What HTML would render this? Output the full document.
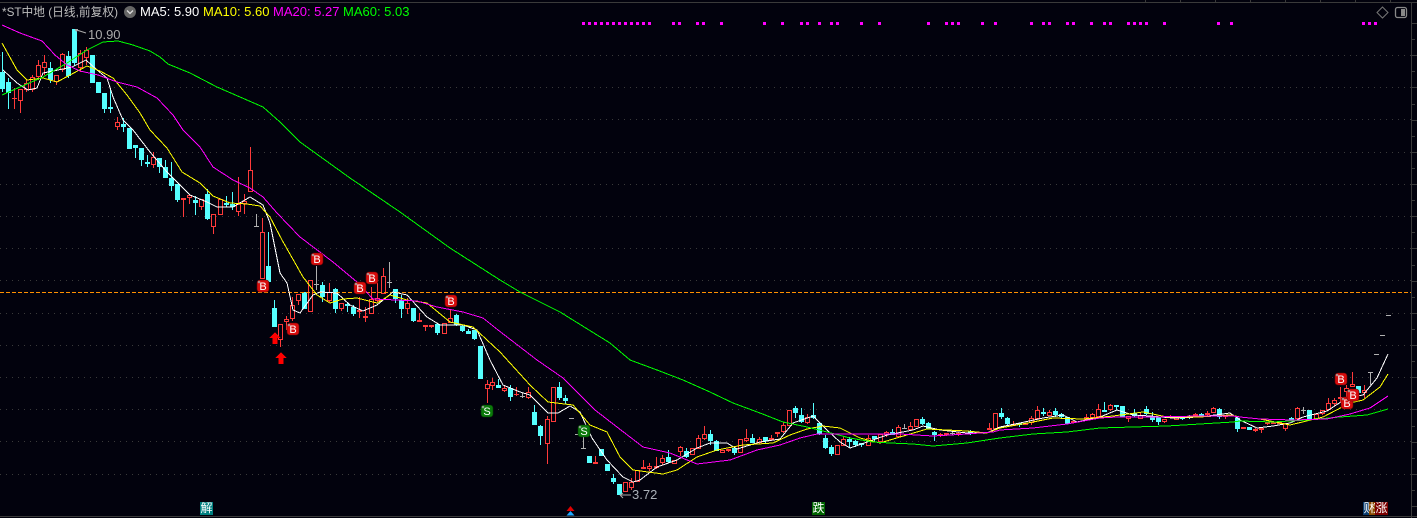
<!DOCTYPE html>
<html lang="zh">
<head>
<meta charset="utf-8">
<title>*ST中地 日线</title>
<style>
html,body{margin:0;padding:0;background:#02020d;width:1417px;height:518px;overflow:hidden}
svg{display:block;position:absolute;left:0;top:0}
text{font-family:"Liberation Sans","Noto Sans CJK SC",sans-serif}
.l{fill:none;shape-rendering:crispEdges;stroke-linejoin:round}
.lab{position:absolute;top:502px;height:13px;width:13px;color:#fff;font:12px/13px "Liberation Sans","Noto Sans CJK SC",sans-serif;text-align:center;overflow:hidden}
</style>
</head>
<body>
<svg id="c" width="1417" height="518" viewBox="0 0 1417 518" xmlns="http://www.w3.org/2000/svg">
<g id="frame" shape-rendering="crispEdges"></g>
<g id="candles" shape-rendering="crispEdges"></g>
<line x1="0" y1="292.5" x2="1411" y2="292.5" stroke="#ff9000" stroke-width="1" stroke-dasharray="4 2" shape-rendering="crispEdges"/>

<polyline class="l" stroke="#ffffff" stroke-width="1" points="3,70 17,83 28,90 37,88 43,73 58,70 72,67 86,60 97,70 107,78 113,97 123,120 133,130 150,152 167,172 190,195 207,202 217,207 233,207 250,197 263,205 270,223 280,273 287,283 293,310 300,313 313,295 320,292 337,293 350,305 363,311 377,305 393,292 407,295 427,317 440,325 463,325 477,330 490,360 503,385 520,392 530,395 548,413 558,413 570,406 580,412 592,438 607,460 623,477 633,482 640,480 657,467 677,460 697,448 710,443 727,443 737,449 760,442 780,439 793,423 813,416 827,430 840,442 850,448 867,442 887,435 913,430 923,426 940,430 967,433 987,433 1000,427 1020,423 1043,418 1063,415 1077,422 1100,417 1117,410 1133,415 1150,416 1173,418 1200,417 1230,413 1240,420 1257,428 1273,426 1290,423 1303,417 1327,411 1347,398 1363,395 1377,378 1388,354"/>
<polyline class="l" stroke="#ffff00" stroke-width="1" points="2,43 17,70 27,80 43,78 57,82 70,75 87,66 100,71 113,78 127,95 140,113 150,130 167,148 182,172 200,183 213,196 230,203 247,204 260,206 270,217 282,240 303,277 317,295 330,303 343,299 357,298 377,303 390,295 407,300 427,303 450,322 473,327 500,352 530,385 548,402 573,405 590,425 607,432 620,457 633,470 663,474 677,470 697,457 717,450 743,445 773,443 790,435 807,429 823,426 840,428 860,438 880,443 900,437 927,429 967,431 987,433 1000,428 1033,422 1053,418 1083,419 1113,416 1143,412 1167,417 1200,417 1230,415 1240,417 1260,419 1290,425 1323,417 1350,403 1363,400 1380,387 1388,374"/>
<polyline class="l" stroke="#00ff00" stroke-width="1" points="2,95 20,87 43,77 67,63 87,50 103,42 118,41 133,45 150,51 160,57 168,64 190,73 217,87 240,97 263,107 280,122 300,142 350,178 400,212 450,248 500,280 520,292 560,312 589,330 610,343 630,360 657,370 683,380 710,392 733,403 760,413 783,422 807,427 827,432 850,438 873,442 890,443 913,444 933,446 967,443 993,439 1000,438 1033,434 1067,432 1100,428 1133,427 1167,426 1200,424 1233,422 1240,421 1273,422 1307,420 1340,417 1367,415 1388,409"/>
<polyline class="l" stroke="#ff00ff" stroke-width="1" points="2,25 20,33 42,41 55,55 67,65 80,71 98,75 117,82 137,87 157,98 173,115 183,130 200,147 213,167 233,180 250,188 263,197 277,213 300,237 333,262 357,282 373,299 397,300 417,301 437,307 463,312 483,318 498,330 537,360 563,378 595,410 617,427 643,447 670,453 697,464 730,460 757,450 780,445 800,438 817,434 843,434 880,434 900,434 933,436 967,434 993,432 1000,430 1033,428 1067,424 1100,418 1117,417 1150,417 1200,416 1233,416 1240,417 1260,419 1293,420 1327,419 1350,414 1370,408 1388,396"/>

<!-- signals -->
<path fill="#ff0000" d="M275 332l5.500 6h-3v6h-5v-6h-3zM281 352l5.500 6h-3v6h-5v-6h-3z" shape-rendering="crispEdges"/>
<g id="badges"></g>

<!-- top magenta signal dots -->
<path id="dots" fill="#ff00ff" shape-rendering="crispEdges" d="M582 22h3v3h-3zM588 22h3v3h-3zM594 22h3v3h-3zM600 22h3v3h-3zM606 22h3v3h-3zM612 22h3v3h-3zM618 22h3v3h-3zM624 22h3v3h-3zM630 22h3v3h-3zM636 22h3v3h-3zM642 22h3v3h-3zM648 22h3v3h-3zM672 22h3v3h-3zM678 22h3v3h-3zM696 22h3v3h-3zM702 22h3v3h-3zM720 22h3v3h-3zM763 22h3v3h-3zM781 22h3v3h-3zM800 22h3v3h-3zM806 22h3v3h-3zM818 22h3v3h-3zM830 22h3v3h-3zM836 22h3v3h-3zM860 22h3v3h-3zM878 22h3v3h-3zM927 22h3v3h-3zM945 22h3v3h-3zM951 22h3v3h-3zM957 22h3v3h-3zM981 22h3v3h-3zM994 22h3v3h-3zM1030 22h3v3h-3zM1042 22h3v3h-3zM1048 22h3v3h-3zM1066 22h3v3h-3zM1072 22h3v3h-3zM1090 22h3v3h-3zM1103 22h3v3h-3zM1109 22h3v3h-3zM1127 22h3v3h-3zM1133 22h3v3h-3zM1139 22h3v3h-3zM1145 22h3v3h-3zM1163 22h3v3h-3zM1217 22h3v3h-3zM1230 22h3v3h-3zM1362 22h3v3h-3zM1368 22h3v3h-3zM1374 22h3v3h-3z"/>

<path d="M86 33L75 29.500M75 29.500l3 0M75 29.500l2 2" stroke="#aaa" fill="none"/>
<path d="M631 495H620M620 495l3-2M620 495l3 3" stroke="#aaa" fill="none"/>
<text x="88" y="39" font-size="13" fill="#aaaaaa">10.90</text>
<text x="632" y="499" font-size="13" fill="#aab0b8">3.72</text>

<!-- header -->
<text x="2" y="16" font-size="12" fill="#bdbdbd" textLength="116" lengthAdjust="spacingAndGlyphs">*ST中地 (日线,前复权)</text>
<circle cx="130" cy="12" r="6" fill="#666"/>
<path d="M127 10.500l3 3 3-3" stroke="#ddd" stroke-width="1.300" fill="none"/>
<text x="140" y="16" font-size="13" fill="#ffffff">MA5: 5.90</text>
<text x="203" y="16" font-size="13" fill="#ffff00">MA10: 5.60</text>
<text x="273" y="16" font-size="13" fill="#ff00ff">MA20: 5.27</text>
<text x="343" y="16" font-size="13" fill="#00ff00">MA60: 5.03</text>

<!-- top right icons -->
<path d="M1382.500 7L1388 12.500L1382.500 18L1377 12.500Z" fill="none" stroke="#777"/>
<rect x="1395.500" y="7.500" width="11" height="10" rx="2" fill="none" stroke="#888" stroke-width="1.300"/>
<rect x="1401" y="9" width="4" height="7" fill="#888"/>

<!-- bottom marker -->
<path d="M570.500 506l4 5h-8z" fill="#e00000"/>
<path d="M570.500 511l4 4.500h-8z" fill="#20a8ff"/>
</svg>

<div class="lab" style="left:200px;background:#008080">解</div>
<div class="lab" style="left:812px;background:#006400">跌</div>
<div class="lab" style="left:1363px;background:#0a3c6e">财</div>
<div class="lab" style="left:1369px;width:8px;background:#8a4a00">权</div>
<div class="lab" style="left:1375px;background:#7a0000">涨</div>

<script>
var R=[[14,88,98,99,109],[20,89,89,101,113],[26,80,83,90,92],[32,75,77,90,92],[38,60,65,77,80],[44,55,62,68,75],[56,75,75,82,85],[62,53,54,70,72],[80,50,53,68,72],[86,47,50,58,65],[117,117,122,127,130],[153,152,157,165,168],[183,198,198,200,217],[189,195,195,198,204],[201,199,199,207,210],[213,214,214,227,234],[220,199,199,215,215],[238,177,204,212,216],[244,194,201,204,214],[250,147,170,192,192],[262,218,232,279,279],[280,324,324,340,347],[286,316,319,322,330],[292,297,305,319,321],[298,294,294,301,305],[310,280,280,312,312],[329,283,292,301,302],[341,303,303,309,311],[359,297,310,312,318],[365,307,316,318,322],[371,287,299,314,314],[377,283,298,301,302],[383,268,276,294,294],[407,298,303,309,314],[419,313,320,322,322],[425,325,325,327,331],[431,325,325,327,328],[444,323,323,334,334],[450,309,318,323,323],[487,380,384,389,403],[492,378,382,386,390],[504,386,388,391,392],[516,387,394,395,396],[528,387,392,398,399],[547,416,419,444,464],[553,387,387,422,422],[595,456,462,464,464],[625,482,482,492,492],[631,478,482,488,490],[637,470,470,482,482],[643,460,467,469,469],[649,463,466,469,471],[656,457,466,468,469],[662,455,458,463,465],[674,460,460,464,464],[680,446,447,452,456],[692,448,448,455,455],[698,435,438,449,449],[704,426,434,439,440],[722,450,450,453,453],[728,449,449,451,452],[740,439,439,453,453],[746,429,438,441,442],[759,437,439,443,444],[771,435,438,440,441],[777,432,432,434,437],[783,422,425,432,433],[789,410,410,426,426],[807,414,417,423,424],[837,445,445,455,455],[843,437,439,446,446],[868,435,438,446,446],[880,434,434,442,442],[886,431,432,435,437],[898,425,427,437,438],[910,422,426,430,431],[916,419,419,427,427],[940,433,434,436,437],[946,433,433,435,436],[958,432,433,435,436],[989,423,428,430,430],[995,413,413,429,429],[1013,421,424,426,426],[1025,423,423,425,425],[1031,416,418,423,425],[1037,406,410,419,419],[1049,410,412,416,416],[1073,421,421,423,423],[1086,414,417,420,421],[1092,413,414,418,418],[1098,404,409,417,417],[1110,404,405,410,411],[1128,416,416,419,422],[1140,412,415,419,419],[1164,419,419,422,423],[1170,415,416,418,417],[1176,417,417,420,420],[1195,413,414,416,417],[1207,411,413,415,416],[1213,407,408,413,413],[1225,415,415,417,419],[1243,427,427,429,429],[1255,428,429,431,432],[1261,428,428,430,433],[1267,422,422,424,425],[1273,422,422,424,424],[1279,422,422,424,424],[1285,423,423,429,431],[1297,407,408,419,419],[1316,414,414,419,419],[1322,410,410,414,415],[1328,398,403,410,410],[1334,398,400,404,406],[1340,387,397,399,402],[1346,385,388,392,398],[1352,372,384,387,387],[1364,385,390,393,398]];
var C=[[2,52,72,89,92],[8,78,82,93,109],[50,62,68,80,83],[68,51,56,76,78],[74,29,29,63,66],[92,55,55,83,83],[98,82,82,93,93],[104,93,93,109,113],[110,90,107,109,113],[123,118,124,127,132],[129,128,128,149,149],[135,145,145,148,158],[141,148,148,160,166],[147,155,162,164,167],[159,158,158,167,173],[165,160,167,178,178],[171,162,178,186,191],[177,184,184,200,202],[195,196,200,203,215],[207,189,194,219,220],[226,196,203,205,207],[232,192,204,207,210],[268,232,266,282,282],[274,300,308,327,327],[304,292,292,309,309],[322,282,285,297,302],[335,288,289,309,313],[347,302,304,306,312],[353,305,307,314,316],[395,289,289,299,303],[401,295,300,309,318],[413,308,308,321,322],[437,324,324,333,335],[456,314,315,325,326],[462,325,326,331,332],[468,329,331,334,334],[474,330,330,339,340],[480,346,346,379,379],[498,379,385,388,388],[510,385,388,397,401],[534,405,412,425,425],[540,425,426,436,445],[559,382,387,398,400],[565,395,398,401,404],[589,456,456,463,463],[601,449,449,456,456],[607,464,464,471,471],[613,474,478,482,484],[619,484,484,495,495],[668,450,457,462,463],[686,448,451,457,458],[710,430,434,441,445],[716,440,441,451,451],[734,447,448,453,455],[752,434,438,443,443],[765,437,437,441,443],[795,406,408,413,418],[801,408,415,422,423],[813,403,415,418,419],[819,422,423,434,435],[825,435,438,448,449],[831,445,447,454,456],[849,437,439,442,448],[855,440,441,445,447],[861,443,443,445,447],[874,436,436,439,441],[892,429,432,435,435],[922,417,419,424,425],[928,422,423,429,429],[934,431,432,435,441],[970,430,431,433,435],[1001,408,413,417,419],[1007,417,418,424,425],[1019,423,423,425,427],[1043,408,412,414,416],[1055,408,411,415,417],[1061,413,414,417,419],[1067,417,417,424,424],[1104,402,410,412,412],[1116,405,405,407,410],[1122,406,406,417,417],[1134,409,413,416,417],[1146,406,409,414,415],[1152,412,417,420,422],[1158,417,417,422,425],[1182,416,417,419,420],[1189,415,416,418,419],[1201,413,414,416,417],[1219,408,409,417,419],[1237,417,418,429,432],[1249,427,427,430,430],[1291,417,418,420,420],[1309,410,410,419,419],[1358,386,386,393,393]];
var G=[[256,214,226,227,227],[316,266,284,285,290],[389,262,282,283,288],[522,393,396,397,398],[571,418,418,419,419],[577,434,434,435,435],[583,437,448,449,449],[904,424,428,429,429],[952,431,433,434,435],[1303,407,410,411,414],[1370,372,372,373,385],[1376,354,354,355,355],[1382,335,335,336,336],[1388,315,315,316,316]];
var BG="#02020d",RED="#ff3a3a",CY="#55ffff",GR="#b0b0b0",h="";
function wick(x,a,b,c){return '<line x1="'+(x+.5)+'" y1="'+a+'" x2="'+(x+.5)+'" y2="'+b+'" stroke="'+c+'"/>'}
function bar(x,a,b,c){return '<rect x="'+(x-2)+'" y="'+a+'" width="5" height="'+Math.max(b-a,1)+'" fill="'+c+'"/>'}
R.forEach(function(d){var x=d[0];
 if(d[1]<d[2])h+=wick(x,d[1],d[2],RED);
 if(d[4]>d[3])h+=wick(x,d[3],d[4],RED);
 if(d[3]-d[2]<3)h+=bar(x,d[2],d[3],RED);
 else h+='<rect x="'+(x-1.5)+'" y="'+(d[2]+.5)+'" width="4" height="'+(d[3]-d[2]-1)+'" fill="'+BG+'" stroke="'+RED+'"/>';
});
C.forEach(function(d){var x=d[0];
 if(d[1]<d[2])h+=wick(x,d[1],d[2],CY);
 if(d[4]>d[3])h+=wick(x,d[3],d[4],CY);
 h+=bar(x,d[2],d[3],CY);
});
G.forEach(function(d){var x=d[0];
 h+=wick(x,d[1],d[4],GR);h+=bar(x,d[2],d[3],GR);
});
document.getElementById("candles").innerHTML=h;

var f='<line x1="0" y1="2.5" x2="1417" y2="2.5" stroke="#3a3a3a"/><line x1="1411.5" y1="2" x2="1411.5" y2="518" stroke="#3a3a3a"/><line x1="0" y1="516.5" x2="1417" y2="516.5" stroke="#3a3a3a"/>';
[1145,1180,1215,1250,1285,1320,1355,1390].forEach(function(x){f+='<line x1="'+(x+.5)+'" y1="0" x2="'+(x+.5)+'" y2="2" stroke="#3a3a3a"/>'});
for(var i=0;i<14;i++){var y=Math.round(55+i*32.2)+.5;
 f+='<line x1="0" y1="'+y+'" x2="1411" y2="'+y+'" stroke="#3a3a3a" stroke-dasharray="1 5"/>';
}
for(var j=0;j<31;j++){var ty=Math.round(23+j*16.1)+.5;
 f+='<line x1="1412" y1="'+ty+'" x2="'+(j%2?1415:1417)+'" y2="'+ty+'" stroke="#3a3a3a"/>';
}
document.getElementById("frame").innerHTML=f;

var B=[[263,286,"B"],[293,329,"B"],[317,259,"B"],[360,288,"B"],[372,278,"B"],[451,301,"B"],[1341,379,"B"],[1347,403,"B"],[1353,395,"B"],[487,411,"S"],[584,431,"S"]],b="";
B.forEach(function(d){var x=d[0],y=d[1],s=d[2]=="S";
 b+='<rect x="'+(x-6)+'" y="'+(y-6)+'" width="12" height="12" rx="3" fill="'+(s?"#0a7a0a":"#d80c0c")+'" stroke="'+(s?"#063d06":"#6a0606")+'" stroke-width=".6"/>';
 b+='<circle cx="'+(x-4)+'" cy="'+(y-4)+'" r="1.3" fill="#aaa" opacity=".8"/>';
 b+='<text x="'+x+'" y="'+(y+4)+'" font-size="11" text-anchor="middle" fill="#fff">'+d[2]+'</text>';
});
document.getElementById("badges").innerHTML=b;
</script>
</body>
</html>
